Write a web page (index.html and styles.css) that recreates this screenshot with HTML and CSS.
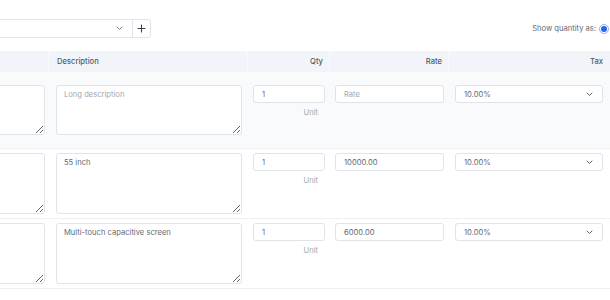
FILE: index.html
```html
<!DOCTYPE html>
<html lang="en">
<head>
    <meta charset="UTF-8">
    <meta name="viewport" content="width=device-width, initial-scale=1.0">
    <title>Invoice Items</title>
    <link rel="stylesheet" href="styles.css">
</head>
<body>
    <div class="page">
        <div class="toolbar">
            <div class="item-picker">
                <div class="picker-select">
                    <span class="picker-value"></span>
                    <svg class="chevron" width="7" height="5" viewBox="0 0 7 5"><path d="M1 1l2.5 2.5L6 1" fill="none" stroke="#6b7280" stroke-width="0.9" stroke-linecap="round"/></svg>
                </div>
                <button class="picker-add" type="button">
                    <svg width="9" height="9" viewBox="0 0 9 9"><path d="M4.5 1v7M1 4.5h7" stroke="#374151" stroke-width="1.1" stroke-linecap="round"/></svg>
                </button>
            </div>
            <div class="qty-mode">
                <span>Show quantity as:</span>
                <span class="radio checked"></span>
            </div>
        </div>

        <div class="items">
            <div class="items-head">
                <div class="cell"></div>
                <div class="cell">Description</div>
                <div class="cell right">Qty</div>
                <div class="cell right">Rate</div>
                <div class="cell right">Tax</div>
            </div>

            <!-- new item row -->
            <div class="item-row new">
                <div class="cell"><textarea class="short" placeholder="Description"></textarea></div>
                <div class="cell"><textarea class="short" placeholder="Long description"></textarea></div>
                <div class="cell">
                    <input type="text" value="1">
                    <div class="unit">Unit</div>
                </div>
                <div class="cell"><input type="text" placeholder="Rate"></div>
                <div class="cell">
                    <div class="tax-select">
                        <span>10.00%</span>
                        <svg class="chevron" width="7" height="5" viewBox="0 0 7 5"><path d="M1 1l2.5 2.5L6 1" fill="none" stroke="#4b5563" stroke-width="0.9" stroke-linecap="round"/></svg>
                    </div>
                </div>
            </div>

            <div class="item-row">
                <div class="cell"><textarea>LED TV</textarea></div>
                <div class="cell"><textarea>55 inch</textarea></div>
                <div class="cell">
                    <input type="text" value="1">
                    <div class="unit">Unit</div>
                </div>
                <div class="cell"><input type="text" value="10000.00"></div>
                <div class="cell">
                    <div class="tax-select">
                        <span>10.00%</span>
                        <svg class="chevron" width="7" height="5" viewBox="0 0 7 5"><path d="M1 1l2.5 2.5L6 1" fill="none" stroke="#4b5563" stroke-width="0.9" stroke-linecap="round"/></svg>
                    </div>
                </div>
            </div>

            <div class="item-row">
                <div class="cell"><textarea>Tablet</textarea></div>
                <div class="cell"><textarea>Multi-touch capacitive screen</textarea></div>
                <div class="cell">
                    <input type="text" value="1">
                    <div class="unit">Unit</div>
                </div>
                <div class="cell"><input type="text" value="6000.00"></div>
                <div class="cell">
                    <div class="tax-select">
                        <span>10.00%</span>
                        <svg class="chevron" width="7" height="5" viewBox="0 0 7 5"><path d="M1 1l2.5 2.5L6 1" fill="none" stroke="#4b5563" stroke-width="0.9" stroke-linecap="round"/></svg>
                    </div>
                </div>
            </div>
        </div>
    </div>
</body>
</html>
```

FILE: styles.css
```css
body {
    margin: 0;
    font-family: Inter, "Noto Sans", sans-serif;
    font-size: 7.6px;
    color: #646b76;
    background: #fff;
    overflow: hidden;
}
.page {
    margin-left: -150px;
    width: 760px;
}
.toolbar {
    display: flex;
    justify-content: space-between;
    align-items: center;
    padding-top: 19px;
    margin-bottom: 13px;
}
.item-picker {
    display: flex;
    margin-left: 6px;
}
.picker-select {
    width: 266px;
    height: 17px;
    border: 1px solid #e1e4e8;
    border-right: none;
    border-radius: 3px 0 0 3px;
    display: flex;
    align-items: center;
    justify-content: flex-end;
    padding-right: 9px;
    box-sizing: content-box;
}
.picker-add {
    width: 19px;
    height: 19px;
    padding: 0;
    border: 1px solid #e1e4e8;
    border-radius: 0 3px 3px 0;
    background: #fff;
    display: flex;
    align-items: center;
    justify-content: center;
}
.qty-mode {
    display: flex;
    align-items: center;
    gap: 3px;
    color: #646b76;
    margin-right: 1px;
}
.radio {
    width: 8px;
    height: 8px;
    border-radius: 50%;
    border: 1px solid #93b4f5;
    position: relative;
}
.radio.checked::after {
    content: "";
    position: absolute;
    top: 1px;
    left: 1px;
    width: 6px;
    height: 6px;
    border-radius: 50%;
    background: #2563eb;
}
.items-head, .item-row {
    display: grid;
    grid-template-columns: 199px 199px 82px 119px 161px;
}
.items-head {
    background: #f1f5f9;
    height: 21px;
    line-height: 21px;
    font-weight: 500;
    color: #525a66;
}
.items-head .cell {
    padding: 0 6px 0 8px;
    border-right: 1px solid #f8fafc;
}
.items-head .cell:last-child {
    border-right: none;
    padding-right: 7px;
}
.right {
    text-align: right;
}
.item-row {
    padding: 4px 0;
    border-bottom: 1px solid #edf0f4;
}
.item-row.new {
    background: #f8fafc;
    padding: 13px 0;
}
.item-row .cell {
    padding: 0 5px;
}
.item-row .cell:nth-child(1) {
    padding: 0 4px 0 6px;
}
.item-row .cell:nth-child(2) {
    padding: 0 6px 0 7px;
}
.item-row .cell:nth-child(5) {
    padding: 0 7px 0 6px;
}
textarea, input {
    display: block;
    width: 100%;
    box-sizing: border-box;
    margin: 0;
    font-family: inherit;
    font-size: 7.6px;
    color: #646b76;
    background: #fff;
    border: 1px solid #e0e3e7;
    border-radius: 3px;
    outline: none;
}
textarea {
    height: 61px;
    padding: 3px 7px;
    line-height: 12px;
    resize: vertical;
}
textarea.short {
    height: 50px;
}
input {
    height: 18px;
    padding: 0 8px;
}
::placeholder {
    color: #a3a7ad;
}
.unit {
    text-align: right;
    padding-right: 7px;
    margin-top: 4px;
    line-height: 12px;
    color: #a3a7ad;
}
.tax-select {
    height: 18px;
    box-sizing: border-box;
    border: 1px solid #e0e3e7;
    border-radius: 3px;
    background: #fff;
    display: flex;
    align-items: center;
    justify-content: space-between;
    padding: 0 9px 0 8px;
    color: #646b76;
}
```
